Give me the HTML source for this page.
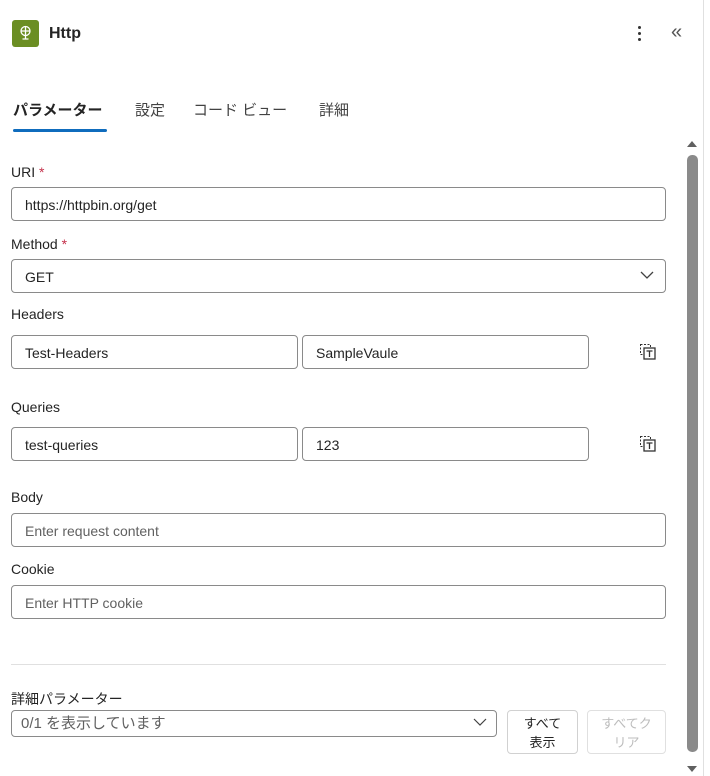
<!DOCTYPE html>
<html><head><meta charset="utf-8"><style>
*{box-sizing:border-box;margin:0;padding:0}
body{width:710px;height:776px;background:#fff;position:relative;overflow:hidden;font-family:"Liberation Sans","Noto Sans CJK JP",sans-serif;color:#242424}
.a{position:absolute}
.lbl{position:absolute;left:11px;font-size:14px;color:#242424}
.req{color:#c4314b}
.in{position:absolute;height:34px;border:1px solid #8a8a8a;border-radius:4px;font-size:14px;padding-left:13px;padding-top:1px;line-height:33px;color:#242424;background:#fff}
.ph{color:#616161}
.tab{position:absolute;top:99px;font-size:15px;color:#424242}
</style></head><body>
<div class="a" style="left:12px;top:20px;width:27px;height:27px;background:#6b8e23;border-radius:3px"></div>
<svg class="a" style="left:18px;top:25px" width="15" height="17" viewBox="0 0 15 17"><circle cx="7.5" cy="6" r="4.5" fill="none" stroke="#fff" stroke-width="1.3"/><path d="M3 6h9M7.5 1.5v9M7.5 10.5v3M4.5 14h6" stroke="#fff" stroke-width="1.3" fill="none"/></svg>
<div class="a" style="left:49px;top:25px;font-size:16px;font-weight:bold;color:#242424">Http</div>
<div class="a" style="left:638px;top:26px;width:3px;height:3px;background:#333;border-radius:50%;box-shadow:0 6px 0 #333,0 12px 0 #333"></div>
<div class="a" style="left:671px;top:21px;font-size:20px;color:#555">«</div>
<div class="a" style="left:703px;top:0;width:1px;height:776px;background:#e0e0e0"></div>
<div class="tab" style="left:13px;font-weight:bold;color:#242424">パラメーター</div>
<div class="tab" style="left:135px">設定</div>
<div class="tab" style="left:193px">コード ビュー</div>
<div class="tab" style="left:319px">詳細</div>
<div class="a" style="left:13px;top:129px;width:94px;height:3px;background:#0f6cbd;border-radius:2px"></div>

<div class="lbl" style="top:164px">URI <span class="req">*</span></div>
<div class="in" style="left:11px;top:187px;width:655px">https://httpbin.org/get</div>
<div class="lbl" style="top:236px">Method <span class="req">*</span></div>
<div class="in" style="left:11px;top:259px;width:655px">GET</div>
<svg class="a" style="left:640px;top:270px" width="14" height="10"><path d="M1 2l6 6 6-6" fill="none" stroke="#424242" stroke-width="1.3"/></svg>
<div class="lbl" style="top:306px">Headers</div>
<div class="in" style="left:11px;top:335px;width:287px">Test-Headers</div>
<div class="in" style="left:302px;top:335px;width:287px">SampleVaule</div>
<div class="lbl" style="top:399px">Queries</div>
<div class="in" style="left:11px;top:427px;width:287px">test-queries</div>
<div class="in" style="left:302px;top:427px;width:287px">123</div>
<svg class="a" style="left:639px;top:343px" width="18" height="18"><rect x="1.5" y="1.5" width="10" height="10" fill="none" stroke="#333" stroke-dasharray="2 1.5"/><rect x="5" y="5" width="11" height="11" fill="#fff" stroke="#333" stroke-width="1.3"/><path d="M7.5 8h6M10.5 8v6" stroke="#333" stroke-width="1.3"/></svg>
<svg class="a" style="left:639px;top:435px" width="18" height="18"><rect x="1.5" y="1.5" width="10" height="10" fill="none" stroke="#333" stroke-dasharray="2 1.5"/><rect x="5" y="5" width="11" height="11" fill="#fff" stroke="#333" stroke-width="1.3"/><path d="M7.5 8h6M10.5 8v6" stroke="#333" stroke-width="1.3"/></svg>
<div class="lbl" style="top:489px">Body</div>
<div class="in ph" style="left:11px;top:513px;width:655px">Enter request content</div>
<div class="lbl" style="top:561px">Cookie</div>
<div class="in ph" style="left:11px;top:585px;width:655px">Enter HTTP cookie</div>
<div class="a" style="left:11px;top:664px;width:655px;height:1px;background:#e0e0e0"></div>
<div class="lbl" style="top:689px">詳細パラメーター</div>
<div class="in ph" style="left:11px;top:710px;width:486px;height:27px;line-height:25px;padding-top:0;padding-left:9px;font-size:15px">0/1 を表示しています</div>
<svg class="a" style="left:473px;top:717px" width="14" height="10"><path d="M1 2l6 6 6-6" fill="none" stroke="#424242" stroke-width="1.2"/></svg>
<div class="a" style="left:507px;top:710px;width:71px;height:44px;border:1px solid #d1d1d1;border-radius:4px;font-size:13px;text-align:center;line-height:19px;padding-top:3px">すべて<br>表示</div>
<div class="a" style="left:587px;top:710px;width:79px;height:44px;border:1px solid #e0e0e0;border-radius:4px;font-size:13px;text-align:center;line-height:19px;padding-top:3px;color:#bdbdbd">すべてク<br>リア</div>

<svg class="a" style="left:685px;top:139px" width="14" height="10"><path d="M2 8h10L7 2z" fill="#606060"/></svg>
<div class="a" style="left:687px;top:155px;width:11px;height:597px;background:#8a8a8a;border-radius:5px"></div>
<svg class="a" style="left:685px;top:764px" width="14" height="10"><path d="M2 2h10L7 8z" fill="#606060"/></svg>
</body></html>
